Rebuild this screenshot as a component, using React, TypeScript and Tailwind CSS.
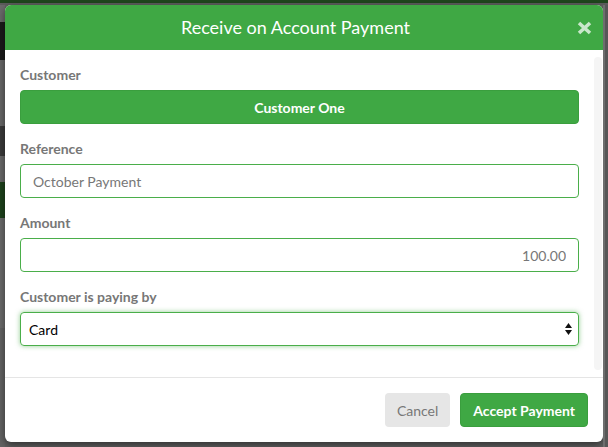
import { useState } from 'react'

function Label({ children }: { children: React.ReactNode }) {
  return <label className="block mb-[5px] text-[14px] leading-[20px] font-bold text-[#777777]">{children}</label>
}

function App() {
  const [reference, setReference] = useState('October Payment')
  const [amount, setAmount] = useState('100.00')

  return (
    <div className="h-[447px] w-[608px] overflow-hidden bg-[#616161] flex flex-col font-['Lato',_'Liberation_Sans',_sans-serif]">
      {/* page behind the backdrop */}
      <div className="h-[3px] bg-[#1f461d] shrink-0" />
      <div className="h-[2px] bg-[#5c5c5c] shrink-0" />

      <div className="flex flex-1">
        <div className="w-[5px] flex flex-col shrink-0">
          <div className="h-[17px] bg-[#6b6b6b]" />
          <div className="h-[38px] bg-[#1b1b1b]" />
          <div className="h-[66px] bg-[#686868]" />
          <div className="h-[30px] bg-[#3b3b3b]" />
          <div className="h-[26px] bg-[#6a6a6a]" />
          <div className="h-[36px] bg-[#1e431c]" />
          <div className="h-[110px] bg-[#6c6c6c]" />
          <div className="flex-1 bg-[#646464]" />
        </div>

        {/* modal */}
        <div className="w-[598px] h-[437px] bg-white rounded-[6px] overflow-hidden shadow-[0_3px_9px_rgba(0,0,0,0.5)] flex flex-col shrink-0">
          <div className="h-[45px] bg-[#3fa844] flex items-center pl-[15px] pr-[11px] shrink-0">
            <h4 className="flex-1 text-center text-white text-[18px] leading-[25px]">Receive on Account Payment</h4>
            <button className="ml-[5px] w-[16px] h-[16px] flex items-center justify-center" aria-label="Close">
              <svg width="15" height="14" viewBox="0 0 15 14">
                <path d="M2 2 L13 12 M13 2 L2 12" stroke="rgba(255,255,255,0.72)" strokeWidth="3.6" strokeLinecap="butt" />
              </svg>
            </button>
          </div>

          <div className="flex h-[327px] shrink-0">
            <div className="flex-1 p-[15px]">
              <div className="mb-[15px]">
                <Label>Customer</Label>
                <button className="w-full h-[34px] rounded-[4px] bg-[#3fa844] border border-[#3a9e3e] text-white text-[14px] font-bold">Customer One</button>
              </div>
              <div className="mb-[15px]">
                <Label>Reference</Label>
                <input
                  value={reference}
                  onChange={(e) => setReference(e.target.value)}
                  className="w-full h-[34px] rounded-[4px] border border-[#4aae4a] px-[12px] text-[14px] text-[#777777] outline-none"
                />
              </div>
              <div className="mb-[15px]">
                <Label>Amount</Label>
                <input
                  value={amount}
                  onChange={(e) => setAmount(e.target.value)}
                  className="w-full h-[34px] rounded-[4px] border border-[#4aae4a] px-[12px] text-right text-[14px] text-[#777777] outline-none"
                />
              </div>
              <div className="mb-[15px]">
                <Label>Customer is paying by</Label>
                <div className="w-full h-[34px] rounded-[4px] border border-[#4aae4a] shadow-[0_0_5px_rgba(76,174,76,0.6)] pl-[8px] pr-[6px] flex items-center justify-between text-[14px] text-black">
                  <span>Card</span>
                  <svg width="7" height="12" viewBox="0 0 7 12">
                    <path d="M3.5 0 L7 5 L0 5 Z" fill="#111" />
                    <path d="M0 7 L7 7 L3.5 12 Z" fill="#111" />
                  </svg>
                </div>
              </div>
            </div>
            {/* scroll track */}
            <div className="w-[8px] mt-[7px] mb-[7px] mr-[1px] rounded-[4px] bg-[#f5f5f5]" />
          </div>

          <div className="border-t border-[#e5e5e5] p-[15px] flex justify-end gap-[10px]">
            <button className="h-[34px] px-[12px] rounded-[4px] bg-[#e6e6e6] text-[14px] text-[#777777]">Cancel</button>
            <button className="h-[34px] px-[12px] rounded-[4px] bg-[#3fa844] border border-[#3a9e3e] text-[14px] font-bold text-white">Accept Payment</button>
          </div>
        </div>

        <div className="flex-1 flex">
          <div className="w-[2px] bg-[#6e6e6e]" />
          <div className="flex-1 bg-[#575757]" />
        </div>
      </div>
    </div>
  )
}

export default App
